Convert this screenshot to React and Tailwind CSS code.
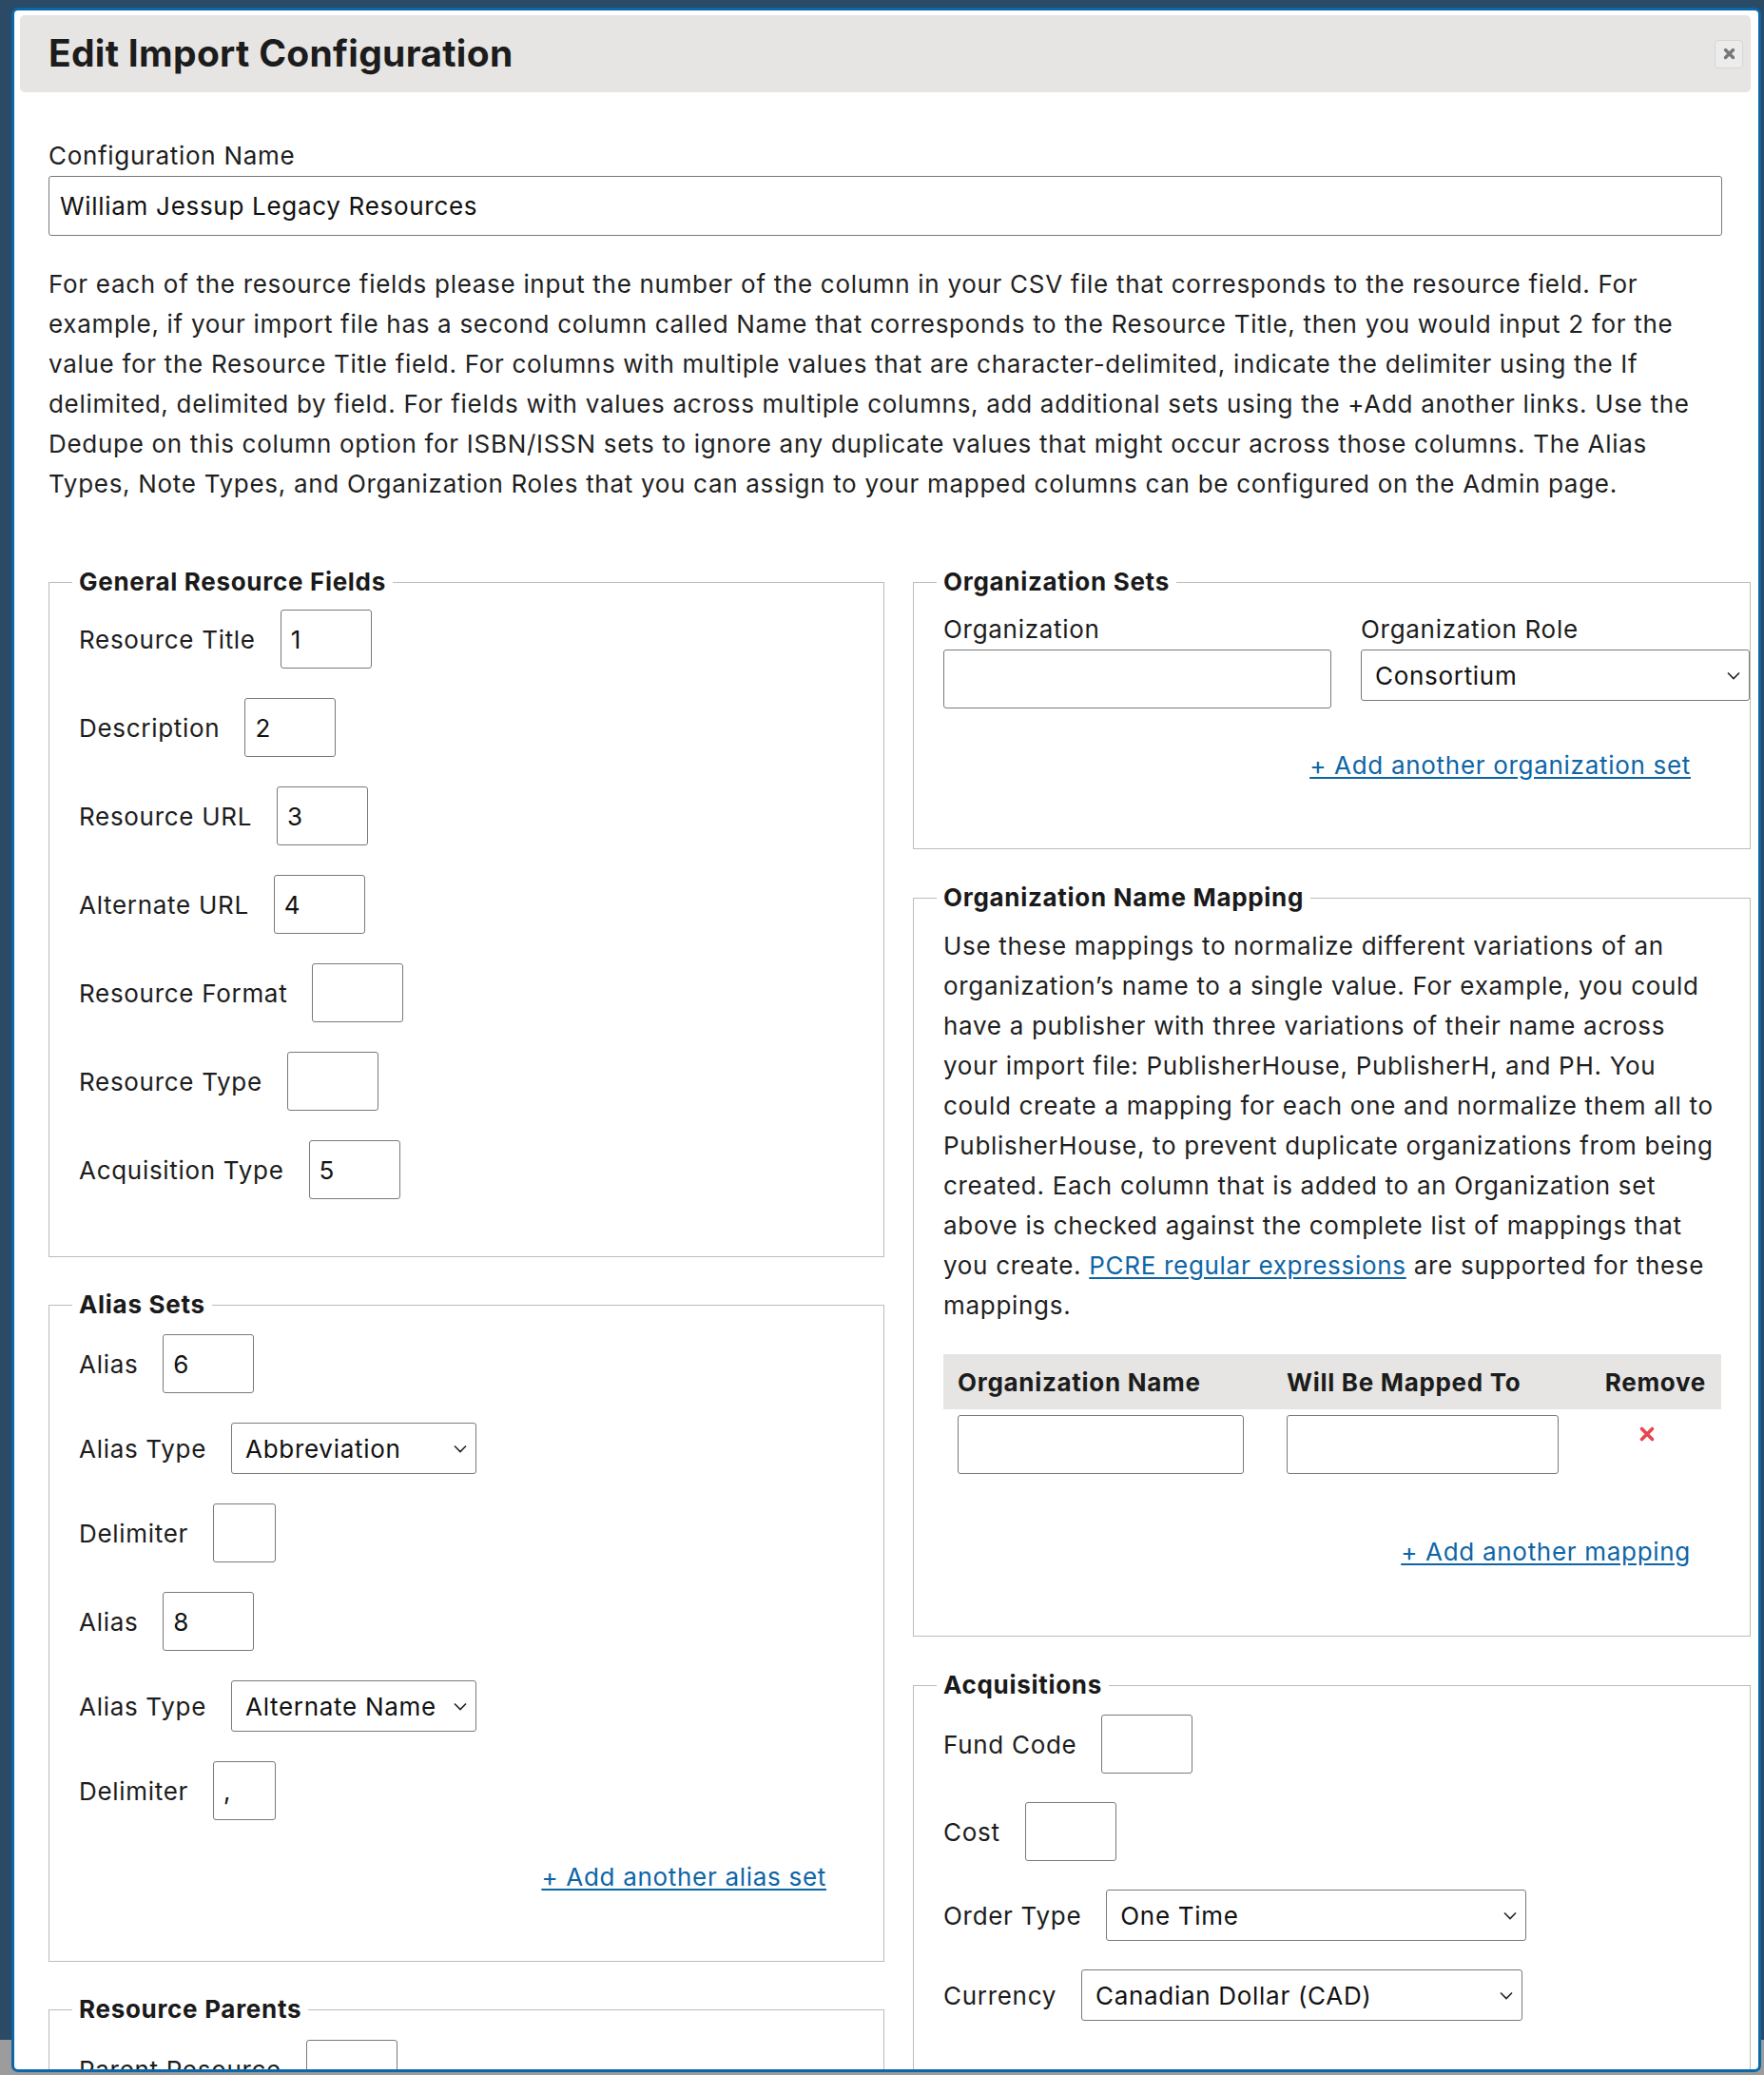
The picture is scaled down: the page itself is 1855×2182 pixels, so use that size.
import React from "react";

const TextBox = ({ value = "", className = "w-[96px]" }) => (
    <input
        type="text"
        readOnly
        value={value}
        className={`${className} h-[62px] shrink-0 border border-[#7a7a7a] rounded-[3px] bg-white px-[10px] text-[26px] tracking-[0.7px] text-[#111] outline-none font-['Inter',sans-serif]`}
    />
);

const SelectBox = ({ value, className = "w-[258px]" }) => (
    <div className={`relative shrink-0 h-[54px] ${className}`}>
        <select
            defaultValue={value}
            className="w-full h-full appearance-none border border-[#7a7a7a] rounded-[3px] bg-white pl-[14px] pr-[36px] text-[26px] tracking-[0.7px] text-[#111] outline-none font-['Inter',sans-serif]"
        >
            <option value={value}>{value}</option>
        </select>
        {/* chevron */}
        <svg
            className="absolute right-[10px] top-[23px] pointer-events-none"
            width="14"
            height="9"
            viewBox="0 0 14 9"
            fill="none"
        >
            <path d="M1 1.5 L7 7.5 L13 1.5" stroke="#222" strokeWidth="1.6" />
        </svg>
    </div>
);

const FieldRow = ({ label, children }) => (
    <div className="flex items-center gap-[26px]">
        <span className="whitespace-nowrap">{label}</span>
        {children}
    </div>
);

const Section = ({ title, className = "", children }) => (
    <fieldset className={`min-w-0 border border-[#bcbcbc] px-[31px] ${className}`}>
        <legend className="-ml-[7px] px-[7px] font-bold leading-[42px] text-[#1a1a1a] whitespace-nowrap">
            {title}
        </legend>
        {children}
    </fieldset>
);

const AddLink = ({ children, className = "" }) => (
    <div className={`text-right leading-[42px] ${className}`}>
        <a href="#" className="text-[#0d65a6] underline underline-offset-[3px]">
            {children}
        </a>
    </div>
);

const App = () => {
    return (
        <div className="w-[1855px] h-[2182px] overflow-hidden bg-[linear-gradient(to_bottom,#2b4a66_2145px,#9c9c9c_2145px)] pl-[12px] pt-[8px] font-['Inter',sans-serif] text-[#1c1c1c]">
            <div className="w-[1840px] h-[2171px] overflow-hidden rounded-[7px] border-[3px] border-[#0b68a8] bg-white">
                {/* header */}
                <div className="ml-[6px] mr-[8px] mt-[5px] h-[81px] rounded-[5px] bg-[#e6e5e3] pl-[30px] pr-[8px] flex items-center justify-between">
                    <h2 className="text-[39px] font-bold tracking-[0.3px] text-[#1c1c1c]">Edit Import Configuration</h2>
                    <button className="w-[30px] h-[30px] rounded-[4px] border border-[#d5d5d5] bg-[#ececec] flex items-center justify-center">
                        <svg width="13" height="13" viewBox="0 0 13 13">
                            <path d="M2.5 2.5 L10.5 10.5 M10.5 2.5 L2.5 10.5" stroke="#777" strokeWidth="3.4" strokeLinecap="round" />
                        </svg>
                    </button>
                </div>

                <div className="pl-[36px] mt-[46px] text-[26px] tracking-[0.7px]">
                    <label className="block leading-[42px]">Configuration Name</label>
                    <input
                        type="text"
                        readOnly
                        value="William Jessup Legacy Resources"
                        className="w-[1760px] h-[63px] border border-[#7a7a7a] rounded-[3px] px-[11px] text-[26px] tracking-[0.7px] text-[#111] outline-none font-['Inter',sans-serif]"
                    />

                    <p className="mt-[30px] leading-[42px] whitespace-nowrap text-[#1f1f1f]">
                        For each of the resource fields please input the number of the column in your CSV file that corresponds to the resource field. For
                        <br />
                        example, if your import file has a second column called Name that corresponds to the Resource Title, then you would input 2 for the
                        <br />
                        value for the Resource Title field. For columns with multiple values that are character-delimited, indicate the delimiter using the If
                        <br />
                        delimited, delimited by field. For fields with values across multiple columns, add additional sets using the +Add another links. Use the
                        <br />
                        Dedupe on this column option for ISBN/ISSN sets to ignore any duplicate values that might occur across those columns. The Alias
                        <br />
                        Types, Note Types, and Organization Roles that you can assign to your mapped columns can be configured on the Admin page.
                    </p>

                    <div className="mt-[61px] w-[1790px] grid grid-cols-[879px_881px] gap-x-[30px] items-start">
                        {/* left column */}
                        <div className="flex flex-col gap-[29px]">
                            <Section title="General Resource Fields" className="pb-[60px]">
                                <div className="pt-[8px] flex flex-col gap-[31px]">
                                    <FieldRow label="Resource Title"><TextBox value="1" /></FieldRow>
                                    <FieldRow label="Description"><TextBox value="2" /></FieldRow>
                                    <FieldRow label="Resource URL"><TextBox value="3" /></FieldRow>
                                    <FieldRow label="Alternate URL"><TextBox value="4" /></FieldRow>
                                    <FieldRow label="Resource Format"><TextBox /></FieldRow>
                                    <FieldRow label="Resource Type"><TextBox /></FieldRow>
                                    <FieldRow label="Acquisition Type"><TextBox value="5" /></FieldRow>
                                </div>
                            </Section>

                            <Section title="Alias Sets" className="pb-[67px]">
                                <div className="pt-[10px] flex flex-col gap-[31px]">
                                    <FieldRow label="Alias"><TextBox value="6" /></FieldRow>
                                    <FieldRow label="Alias Type"><SelectBox value="Abbreviation" /></FieldRow>
                                    <FieldRow label="Delimiter"><TextBox className="w-[66px]" /></FieldRow>
                                    <FieldRow label="Alias"><TextBox value="8" /></FieldRow>
                                    <FieldRow label="Alias Type"><SelectBox value="Alternate Name" /></FieldRow>
                                    <FieldRow label="Delimiter"><TextBox value="," className="w-[66px]" /></FieldRow>
                                </div>
                                <AddLink className="mt-[39px] pr-[29px]">+ Add another alias set</AddLink>
                            </Section>

                            <Section title="Resource Parents" className="pb-[60px]">
                                <div className="pt-[11px] flex flex-col gap-[31px]">
                                    <FieldRow label="Parent Resource"><TextBox /></FieldRow>
                                </div>
                            </Section>
                        </div>

                        {/* right column */}
                        <div className="flex flex-col gap-[30px]">
                            <Section title="Organization Sets" className="pb-[66px]">
                                <div className="pt-[8px] grid grid-cols-[408px_409px] gap-x-[31px]">
                                    <div>
                                        <label className="block leading-[42px]">Organization</label>
                                        <TextBox className="w-[408px]" />
                                    </div>
                                    <div>
                                        <label className="block leading-[42px]">Organization Role</label>
                                        <SelectBox value="Consortium" className="w-[409px]" />
                                    </div>
                                </div>
                                <AddLink className="mt-[39px] pr-[31px]">+ Add another organization set</AddLink>
                            </Section>

                            <Section title="Organization Name Mapping" className="pb-[67px]">
                                <p className="pt-[9px] leading-[42px] whitespace-nowrap text-[#1f1f1f]">
                                    Use these mappings to normalize different variations of an
                                    <br />
                                    organization’s name to a single value. For example, you could
                                    <br />
                                    have a publisher with three variations of their name across
                                    <br />
                                    your import file: PublisherHouse, PublisherH, and PH. You
                                    <br />
                                    could create a mapping for each one and normalize them all to
                                    <br />
                                    PublisherHouse, to prevent duplicate organizations from being
                                    <br />
                                    created. Each column that is added to an Organization set
                                    <br />
                                    above is checked against the complete list of mappings that
                                    <br />
                                    you create.{" "}
                                    <a href="#" className="text-[#0d65a6] underline underline-offset-[3px]">
                                        PCRE regular expressions
                                    </a>{" "}
                                    are supported for these
                                    <br />
                                    mappings.
                                </p>

                                <div className="mt-[30px] w-[818px]">
                                    <div className="grid grid-cols-[346px_331px_141px] h-[58px] items-center bg-[#e6e5e3] font-bold">
                                        <div className="pl-[15px] whitespace-nowrap">Organization Name</div>
                                        <div className="pl-[15px] whitespace-nowrap">Will Be Mapped To</div>
                                        <div className="pr-[16px] text-right">Remove</div>
                                    </div>
                                    <div className="grid grid-cols-[346px_331px_141px] pt-[6px]">
                                        <div className="pl-[15px]"><TextBox className="w-[301px]" /></div>
                                        <div className="pl-[15px]"><TextBox className="w-[286px]" /></div>
                                        <div className="pl-[54px] pt-[11px]">
                                            <svg width="18" height="18" viewBox="0 0 18 18">
                                                <path d="M3.5 3.5 L14.5 14.5 M14.5 3.5 L3.5 14.5" stroke="#e5464f" strokeWidth="3.6" strokeLinecap="round" />
                                            </svg>
                                        </div>
                                    </div>
                                </div>
                                <AddLink className="mt-[61px] pr-[31px]">+ Add another mapping</AddLink>
                            </Section>

                            <Section title="Acquisitions" className="pb-[60px]">
                                <div className="pt-[10px] flex flex-col gap-[30px]">
                                    <FieldRow label="Fund Code"><TextBox /></FieldRow>
                                    <FieldRow label="Cost"><TextBox /></FieldRow>
                                    <FieldRow label="Order Type"><SelectBox value="One Time" className="w-[442px]" /></FieldRow>
                                    <FieldRow label="Currency"><SelectBox value="Canadian Dollar (CAD)" className="w-[464px]" /></FieldRow>
                                </div>
                            </Section>
                        </div>
                    </div>
                </div>
            </div>
        </div>
    );
};

export default App;
